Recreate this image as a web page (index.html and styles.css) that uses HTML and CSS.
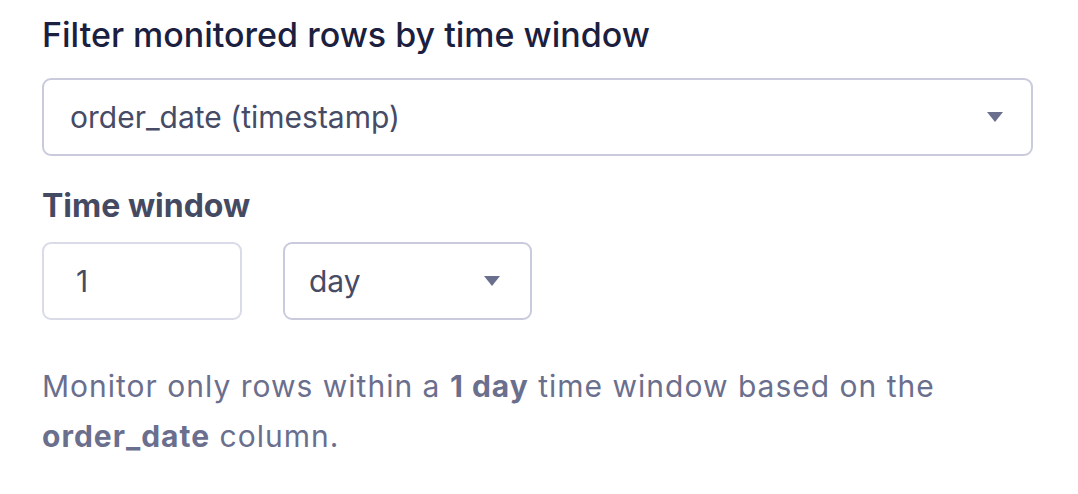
FILE: index.html
```html
<!DOCTYPE html>
<html>
<head>
<meta charset="utf-8">
<link rel="stylesheet" href="styles.css">
</head>
<body>
<div class="panel">
  <div class="title">Filter monitored rows by time window</div>
  <div class="select wide">
    <span class="value">order_date (timestamp)</span>
    <svg class="caret" width="16" height="10" viewBox="0 0 16 10"><path d="M0 0H16L8 10Z" fill="#6b6f8e"/></svg>
  </div>
  <div class="label">Time window</div>
  <div class="row">
    <div class="input">1</div>
    <div class="select small">
      <span class="value">day</span>
      <svg class="caret" width="16" height="10" viewBox="0 0 16 10"><path d="M0 0H16L8 10Z" fill="#6b6f8e"/></svg>
    </div>
  </div>
  <p class="help">Monitor only rows within a <b>1 day</b> time window based on the <b>order_date</b> column.</p>
</div>
</body>
</html>
```
FILE: styles.css
```css
html, body {
  margin: 0;
  background: #fff;
}
body {
  font-family: Inter, "Noto Sans", sans-serif;
}
.panel {
  padding: 15px 0 0 42px;
  width: 991px;
}
.title {
  font-size: 34px;
  font-weight: 500;
  color: #1b2040;
  line-height: 40px;
}
.select, .input {
  box-sizing: border-box;
  height: 78px;
  border: 2px solid #c9cbdc;
  border-radius: 9px;
  display: flex;
  align-items: center;
  font-size: 30px;
  color: #464b66;
}
.select.wide {
  margin-top: 23px;
  width: 991px;
  padding: 0 28px 0 26px;
  justify-content: space-between;
}
.label {
  margin-top: 32px;
  font-size: 32px;
  font-weight: 700;
  color: #454a63;
  line-height: 36px;
}
.row {
  margin-top: 18px;
  display: flex;
  gap: 41px;
}
.input {
  width: 200px;
  border-color: #d9dbe8;
  padding-left: 32px;
}
.select.small {
  width: 249px;
  padding: 0 30px 0 24px;
  justify-content: space-between;
}
.help {
  margin: 41px 0 0;
  font-size: 30px;
  letter-spacing: 1px;
  line-height: 50px;
  color: #6b6f8e;
  width: 960px;
}
.help b {
  font-weight: 700;
}
```
